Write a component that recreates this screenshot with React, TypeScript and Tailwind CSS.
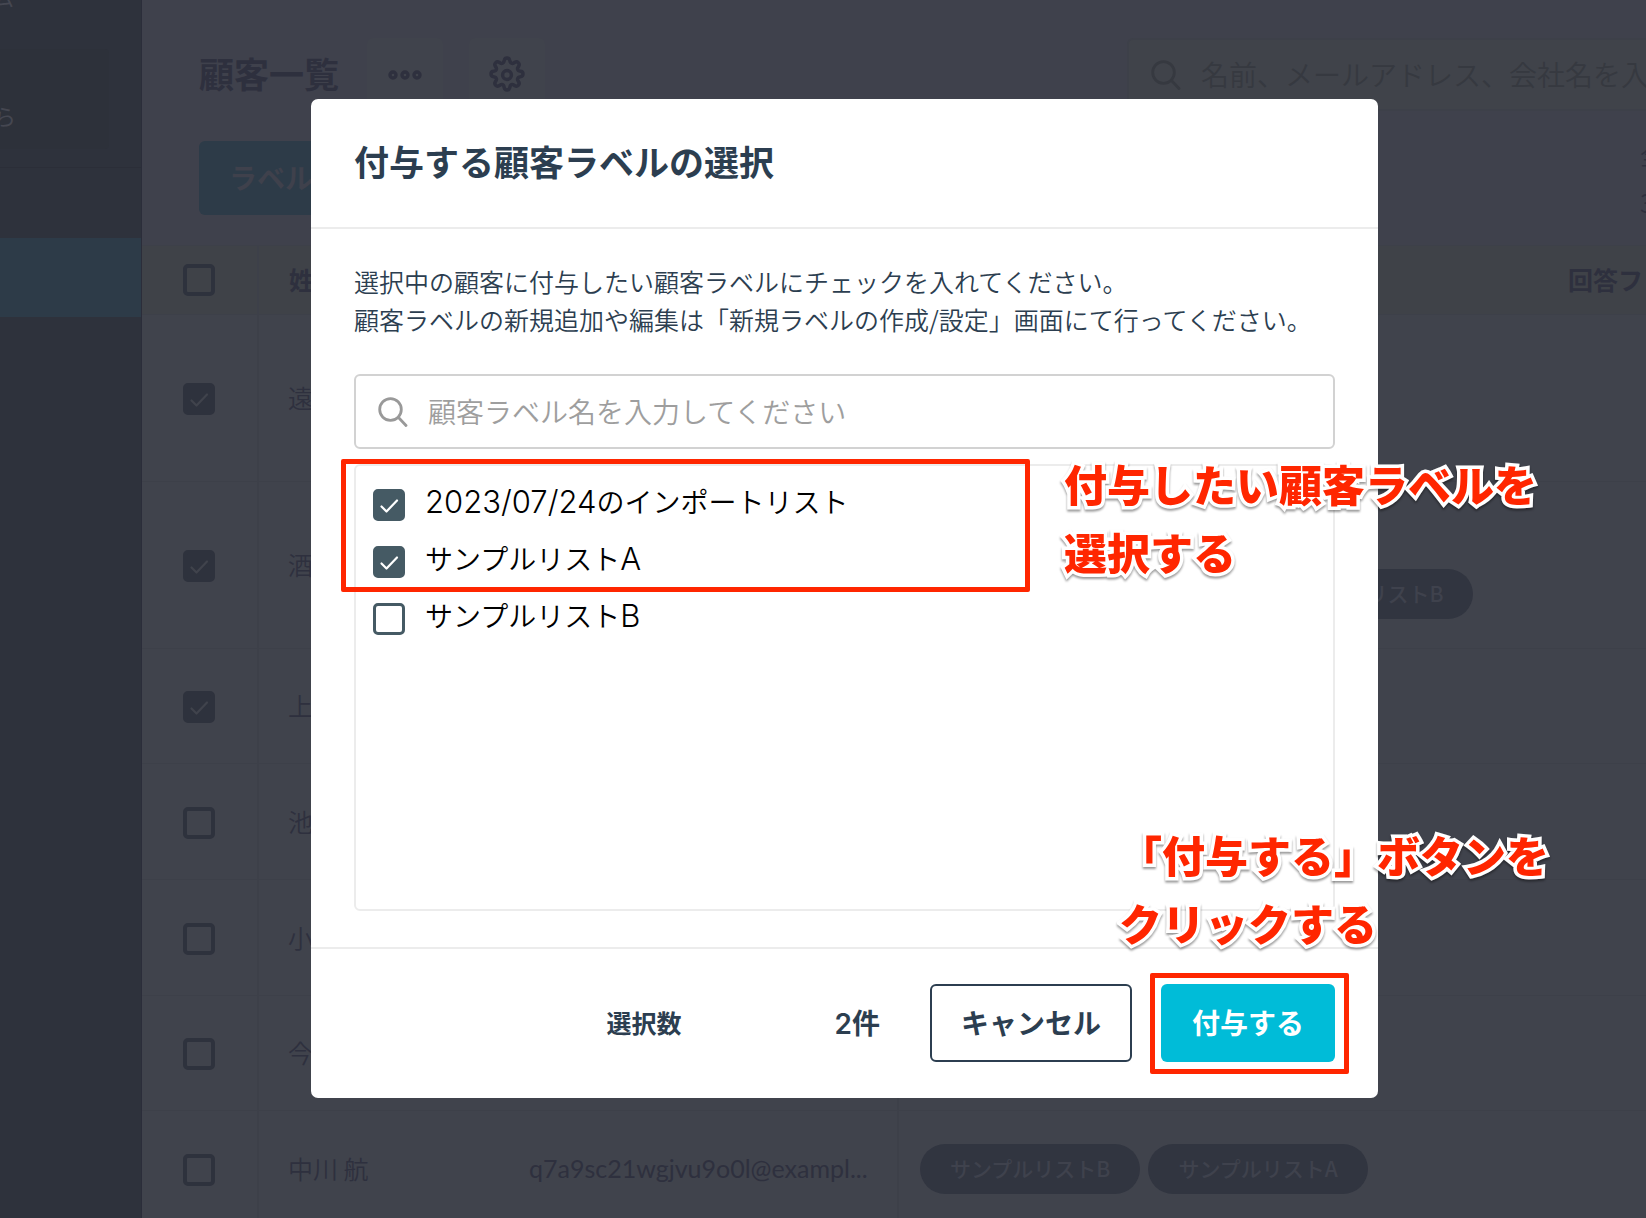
import { Fragment, useState } from "react";
import type { InputHTMLAttributes } from "react";

type Customer = {
    name: string;
    email?: string;
    labels?: string[];
    checked?: boolean;
    height: string;
};

const CUSTOMERS: Customer[] = [
    { name: "遠", checked: true, height: "h-[167px]" },
    {
        name: "酒",
        checked: true,
        height: "h-[167px]",
        labels: [
            "2023/07/24のインポートリスト",
            "資料請求インポートリストA",
            "サンプルリストB"
        ]
    },
    { name: "上", checked: true, height: "h-[115px]" },
    { name: "池", height: "h-[116px]" },
    { name: "小", height: "h-[116px]" },
    { name: "今", height: "h-[115px]" },
    {
        name: "中川 航",
        email: "q7a9sc21wgjvu9o0l@exampl...",
        height: "h-[116px]",
        labels: ["サンプルリストB", "サンプルリストA"]
    }
];

const LABELS = ["2023/07/24のインポートリスト", "サンプルリストA", "サンプルリストB"];

const SearchIcon = ({ className }: { className: string }) => (
    <svg
        viewBox="0 0 30 30"
        className={className}
        fill="none"
        stroke="currentColor"
        strokeWidth="2.8"
        strokeLinecap="round"
        aria-hidden="true"
    >
        <circle cx="12.5" cy="12.5" r="10.8" />
        <path d="M20.5 20.5 28 28.5" />
    </svg>
);

const DotsIcon = () => (
    <svg
        viewBox="0 0 34 10"
        className="h-[10px] w-[34px]"
        fill="none"
        stroke="currentColor"
        strokeWidth="3.4"
        aria-hidden="true"
    >
        <circle cx="5" cy="5" r="3" />
        <circle cx="17" cy="5" r="3" />
        <circle cx="29" cy="5" r="3" />
    </svg>
);

const GearIcon = () => (
    <svg
        viewBox="0 0 24 24"
        className="size-[38px]"
        fill="none"
        stroke="currentColor"
        strokeWidth="2.2"
        strokeLinejoin="round"
        aria-hidden="true"
    >
        <circle cx="12" cy="12" r="2.8" />
        <path d="M10.3 2.6a1.75 1.75 0 0 1 3.4 0l.3 1.1a1.4 1.4 0 0 0 2 .83l1-.57a1.75 1.75 0 0 1 2.4 2.4l-.57 1a1.4 1.4 0 0 0 .83 2l1.1.3a1.75 1.75 0 0 1 0 3.4l-1.1.3a1.4 1.4 0 0 0-.83 2l.57 1a1.75 1.75 0 0 1-2.4 2.4l-1-.57a1.4 1.4 0 0 0-2 .83l-.3 1.1a1.75 1.75 0 0 1-3.4 0l-.3-1.1a1.4 1.4 0 0 0-2-.83l-1 .57a1.75 1.75 0 0 1-2.4-2.4l.57-1a1.4 1.4 0 0 0-.83-2l-1.1-.3a1.75 1.75 0 0 1 0-3.4l1.1-.3a1.4 1.4 0 0 0 .83-2l-.57-1a1.75 1.75 0 0 1 2.4-2.4l1 .57a1.4 1.4 0 0 0 2-.83z" />
    </svg>
);

type CheckboxProps = InputHTMLAttributes<HTMLInputElement> & { dimmed?: boolean };

const Checkbox = ({ dimmed, ...props }: CheckboxProps) => (
    <span className="relative block size-8 shrink-0">
        <input
            type="checkbox"
            className={
                dimmed
                    ? "peer block size-8 appearance-none rounded-[5px] border-4 border-[#2e323d] checked:bg-[#2e323d]"
                    : "peer block size-8 appearance-none rounded-[5px] border-[3px] border-[#455a64] checked:bg-[#455a64]"
            }
            {...props}
        />
        <svg
            viewBox="0 0 32 32"
            className={
                dimmed
                    ? "pointer-events-none absolute inset-0 hidden text-[#40434c] peer-checked:block"
                    : "pointer-events-none absolute inset-0 hidden text-white peer-checked:block"
            }
            fill="none"
            stroke="currentColor"
            strokeWidth="2.2"
            strokeLinecap="round"
            strokeLinejoin="round"
            aria-hidden="true"
        >
            <path d="M8.5 17.5 13.5 22.5 24 11.5" />
        </svg>
    </span>
);

const LabelPill = ({ name }: { name: string }) => (
    <span className="flex h-[50px] items-center rounded-full bg-[#313540] px-[30px] text-[21px] font-medium whitespace-nowrap text-[#3f424d]">
        {name}
    </span>
);

const Sidebar = () => (
    <nav className="flex w-[142px] shrink-0 flex-col border-r border-[#2b2d3a] bg-[#2e323c] text-[22px] text-[#454751]">
        <div className="-mt-4 -ml-2 h-[65px] leading-6">ム</div>
        <div className="mr-8 flex h-[100px] items-center rounded-r bg-[#2d313a] pt-8">
            <span className="-ml-1.5">ら</span>
        </div>
        <div className="h-[19px] border-b border-[#2b2e38]" />
        <a href="#customers" aria-label="顧客一覧" className="mt-[70px] block h-[79px] bg-[#2d3b48]" />
    </nav>
);

const CustomerTable = () => (
    <table className="mt-[30px] w-full table-fixed border-collapse text-left text-[25px] text-[#2e303e]">
        <colgroup>
            <col className="w-[116px]" />
            <col className="w-[240px]" />
            <col className="w-[400px]" />
            <col className="w-[640px]" />
            <col />
        </colgroup>
        <thead className="bg-[#3f4248]">
            <tr className="h-[69px] border-y border-[#3d4049]">
                <th className="border-r-2 border-[#3d4049] pl-[41px]">
                    <Checkbox dimmed aria-label="すべて選択" />
                </th>
                <th className="pl-[30px] font-bold">姓名</th>
                <th />
                <th />
                <th className="pl-[30px] font-bold whitespace-nowrap">回答フォーム</th>
            </tr>
        </thead>
        <tbody className="bg-[#40434c] font-[350]">
            {CUSTOMERS.map(({ name, email, labels, checked, height }) => (
                <tr key={name} className={`border-b border-[#3d4049] ${height}`}>
                    <td className="border-r-2 border-[#3d4049] pt-0.5 pl-[41px]">
                        <Checkbox dimmed defaultChecked={checked} aria-label={name} />
                    </td>
                    <td className="pl-[29px] whitespace-nowrap">{name}</td>
                    <td className="border-r-2 border-[#3d4049] pl-[31px] font-[Lato] font-normal whitespace-nowrap">
                        {email}
                    </td>
                    <td className="pl-[21px]">
                        <div className="flex flex-wrap gap-2">
                            {labels?.map((label) => <LabelPill key={label} name={label} />)}
                        </div>
                    </td>
                    <td />
                </tr>
            ))}
        </tbody>
    </table>
);

const CustomerPage = () => (
    <main className="min-w-0 flex-1 overflow-hidden bg-[#3f414c] text-[#2e303e]">
        <div className="w-[1600px]">
            <div className="mt-[38px] flex h-[73px] items-center justify-between px-[57px]">
                <div className="flex items-center">
                    <h1 className="pb-0.5 text-[35px] font-bold">顧客一覧</h1>
                    <button
                        type="button"
                        aria-label="メニュー"
                        className="ml-[28px] flex h-[73px] w-[76px] items-center justify-center rounded-md bg-[#40434c]"
                    >
                        <DotsIcon />
                    </button>
                    <button
                        type="button"
                        aria-label="設定"
                        className="ml-[26px] flex h-[73px] w-[76px] items-center justify-center rounded-md bg-[#40434c]"
                    >
                        <GearIcon />
                    </button>
                </div>
                <div className="flex h-[73px] w-[558px] items-center gap-5 rounded-md border-2 border-[#3d4049] bg-[#40434a] pl-[22px] text-[#363940]">
                    <SearchIcon className="size-[30px] shrink-0" />
                    <input
                        type="text"
                        aria-label="顧客を検索"
                        placeholder="名前、メールアドレス、会社名を入力"
                        className="min-w-0 flex-1 bg-transparent pb-0.5 text-[28px] font-[350] outline-none placeholder:text-[#363940]"
                    />
                </div>
            </div>
            <div className="mt-[30px] flex h-[74px] items-center justify-between px-[57px]">
                <button
                    type="button"
                    className="h-[74px] rounded-md bg-[#2d3b48] px-[30px] pb-0.5 text-[28px] font-bold text-[#3f414c]"
                >
                    ラベル付与
                </button>
                <p className="w-[45px] text-[25px] leading-[48px] font-[350]">
                    全
                    <br />3
                </p>
            </div>
            <CustomerTable />
        </div>
    </main>
);

/* Latin parts are set a little larger than the kana around them */
const LabelName = ({ name }: { name: string }) => (
    <span className="pb-[7px] text-[28px] leading-8 font-[350] text-black">
        {name.split(/([0-9A-Z/]+)/).map((part, i) =>
            i % 2 ? (
                <span key={i} className="font-[Inter] text-[31px]">
                    {part}
                </span>
            ) : (
                <Fragment key={i}>{part}</Fragment>
            )
        )}
    </span>
);

const Annotation = ({ lines, className }: { lines: string[]; className: string }) => (
    <p
        className={`pointer-events-none absolute text-[43px] leading-[68px] font-black whitespace-nowrap text-[#ff2600] drop-shadow-[0_2px_1px_rgba(0,0,0,0.4)] [-webkit-text-stroke:7px_white] [paint-order:stroke_fill] ${className}`}
    >
        {lines.map((line) => (
            <span key={line} className="block">
                {line}
            </span>
        ))}
    </p>
);

const LabelDialog = () => {
    const [selected, setSelected] = useState(LABELS.slice(0, 2));

    const toggle = (label: string) =>
        setSelected((prev) =>
            prev.includes(label) ? prev.filter((l) => l !== label) : [...prev, label]
        );

    return (
        <div
            role="dialog"
            aria-labelledby="dialog-title"
            className="relative w-[1067px] rounded-[7px] bg-white text-[#2c3e50]"
        >
            <header className="flex h-[128px] items-center px-[43px] pb-1">
                <h2 id="dialog-title" className="text-[35px] font-bold">
                    付与する顧客ラベルの選択
                </h2>
            </header>

            <div className="border-y-2 border-[#ececec] px-[43px] pt-[33px] pb-9">
                <p className="text-[25px] leading-[38px] font-[350] whitespace-nowrap">
                    選択中の顧客に付与したい顧客ラベルにチェックを入れてください。
                    <br />
                    顧客ラベルの新規追加や編集は「新規ラベルの作成/設定」画面にて行ってください。
                </p>

                <div className="mt-[36px] flex h-[75px] items-center gap-5 rounded-md border-2 border-[#d2d2d2] pl-[22px] text-[#999]">
                    <SearchIcon className="size-[30px] shrink-0" />
                    <input
                        type="text"
                        aria-label="顧客ラベル名"
                        placeholder="顧客ラベル名を入力してください"
                        className="min-w-0 flex-1 bg-transparent pb-0.5 text-[28px] font-[350] outline-none placeholder:text-[#9e9e9e]"
                    />
                </div>

                <div className="relative mt-[15px] h-[447px] rounded-md border-2 border-[#ececec] px-[17px] pt-[23px]">
                    <ul className="flex flex-col gap-[25px]">
                        {LABELS.map((label) => (
                            <li key={label}>
                                <label className="flex h-8 items-center gap-5">
                                    <Checkbox
                                        checked={selected.includes(label)}
                                        onChange={() => toggle(label)}
                                    />
                                    <LabelName name={label} />
                                </label>
                            </li>
                        ))}
                    </ul>
                    <div className="pointer-events-none absolute -top-[7px] -left-[15px] h-[133px] w-[689px] rounded-[2px] border-[5px] border-[#ff2600]" />
                </div>
            </div>

            <footer className="flex items-center justify-end px-[43px] pt-[35px] pb-9 font-bold">
                <span className="text-[25px]">選択数</span>
                <span className="ml-[153px] text-[28px]">
                    <span className="font-[Inter] font-semibold">{selected.length}</span>件
                </span>
                <button
                    type="button"
                    className="ml-[50px] h-[78px] rounded-md border-2 border-[#2c3e50] px-[29px] pb-0.5 text-[28px]"
                >
                    キャンセル
                </button>
                <div className="relative ml-[29px]">
                    <button
                        type="button"
                        className="block h-[78px] rounded-md bg-[#00bcd8] px-[31px] pb-0.5 text-[28px] text-white"
                    >
                        付与する
                    </button>
                    <div className="pointer-events-none absolute -top-[11px] -right-[14px] -bottom-3 -left-[11px] rounded-[2px] border-[5px] border-[#ff2600]" />
                </div>
            </footer>

            <Annotation lines={["付与したい顧客ラベルを", "選択する"]} className="top-[350px] left-[753px]" />
            <Annotation lines={["「付与する」ボタンを", "クリックする"]} className="top-[721px] left-[808px]" />
        </div>
    );
};

const App = () => (
    <div
        lang="ja"
        className="relative flex h-screen overflow-hidden font-['Noto_Sans_CJK_JP',sans-serif]"
    >
        <Sidebar />
        <CustomerPage />
        <div className="absolute inset-0 flex items-start justify-center pt-[99px] pl-[43px]">
            <LabelDialog />
        </div>
    </div>
);

export default App;
